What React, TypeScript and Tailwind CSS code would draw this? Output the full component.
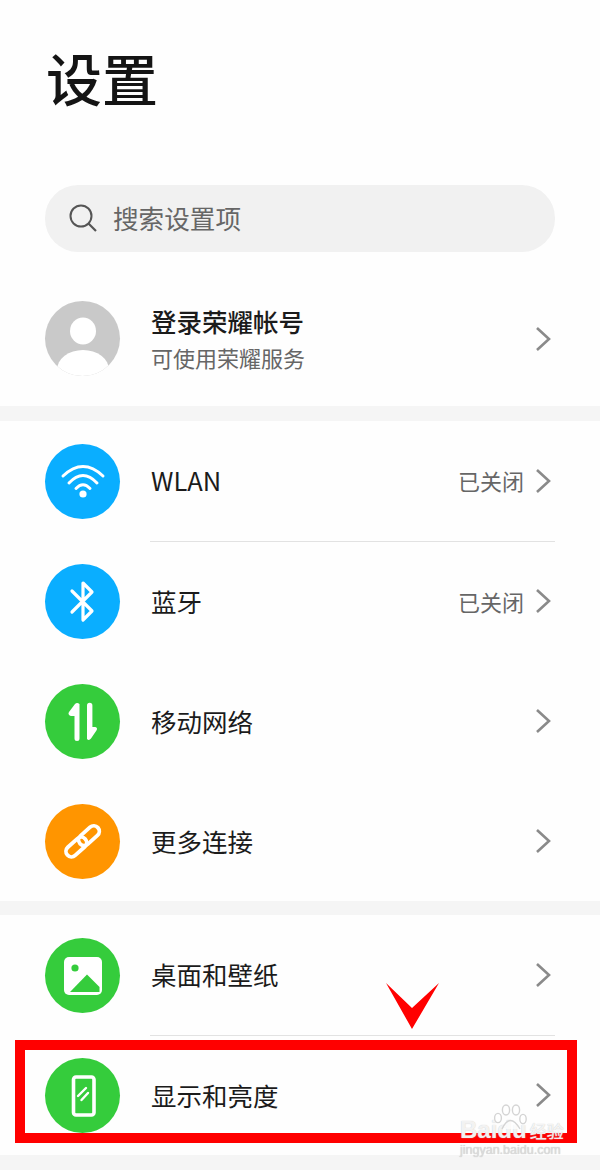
import type { ReactNode } from 'react';

const CJK = 'font-["Noto_Sans_CJK_SC","Noto_Sans",sans-serif]';

function Chevron() {
  return (
    <svg width="16" height="26" viewBox="0 0 16 26" className="shrink-0">
      <path d="M2 2 L14 13 L2 24" fill="none" stroke="#8a8a8a" strokeWidth="2.6" />
    </svg>
  );
}

function IconCircle({ color, children }: { color: string; children: ReactNode }) {
  return (
    <div className={`h-[75px] w-[75px] shrink-0 rounded-full ${color}`}>
      <svg width="75" height="75" viewBox="0 0 75 75">
        {children}
      </svg>
    </div>
  );
}

function WifiIcon() {
  return (
    <IconCircle color="bg-[#0aaeff]">
      <g fill="none" stroke="#fff" strokeWidth="3" strokeLinecap="round">
        <path d="M18 32 Q38 13 58 32" />
        <path d="M24 39 Q38 24 52 39" />
        <path d="M31 44.5 Q38 37 45 44.5" />
      </g>
      <circle cx="38" cy="50" r="3.6" fill="#fff" />
    </IconCircle>
  );
}

function BluetoothIcon() {
  return (
    <IconCircle color="bg-[#0aaeff]">
      <path
        d="M27 27 L47 47 L38 56 V19 L47 28 L27 48"
        fill="none"
        stroke="#fff"
        strokeWidth="3.2"
        strokeLinecap="round"
        strokeLinejoin="round"
      />
    </IconCircle>
  );
}

function MobileIcon() {
  return (
    <IconCircle color="bg-[#35cc3c]">
      <path
        d="M34.5 20 V54.5 a2.5 2.5 0 0 1 -5 0 V32 H26 a2.5 2.5 0 0 1 -2 -4 L30 20 Q32 18 34.5 20 Z"
        fill="#fff"
      />
      <path
        d="M42 21.5 a2.5 2.5 0 0 1 5.4 0 V43 H50 a2 2 0 0 1 1.6 3.2 L46 54.5 Q44 57 42 55 Z"
        fill="#fff"
      />
    </IconCircle>
  );
}

function LinkIcon() {
  return (
    <IconCircle color="bg-[#ff9500]">
      <g fill="none" stroke="#fff" strokeWidth="3.8" transform="rotate(-42 38 37)">
        <rect x="17" y="31.5" width="24" height="11" rx="5.5" />
        <rect x="34" y="31.5" width="24" height="11" rx="5.5" />
      </g>
    </IconCircle>
  );
}

function ImageIcon() {
  return (
    <IconCircle color="bg-[#35cc3c]">
      <rect x="19" y="19" width="38" height="38" rx="5" fill="#fff" />
      <circle cx="30" cy="30" r="3.6" fill="#35cc3c" />
      <path d="M25 54 L42 36.5 L54.5 49 V54 Z" fill="#35cc3c" />
    </IconCircle>
  );
}

function PhoneIcon() {
  return (
    <IconCircle color="bg-[#35cc3c]">
      <rect x="28.5" y="19" width="20.5" height="38" rx="2.5" fill="none" stroke="#fff" strokeWidth="3.6" />
      <g stroke="#fff" strokeWidth="2.4" strokeLinecap="round">
        <path d="M33 38 L41 30" />
        <path d="M36.5 42 L43 35" />
      </g>
    </IconCircle>
  );
}

function Avatar() {
  return (
    <div className="h-[75px] w-[75px] shrink-0 overflow-hidden rounded-full bg-[#c9c9c9]">
      <svg width="75" height="75" viewBox="0 0 75 75">
        <ellipse cx="38" cy="30" rx="13" ry="13.5" fill="#fff" />
        <ellipse cx="38" cy="69" rx="26" ry="20" fill="#fff" />
      </svg>
    </div>
  );
}

function Row({
  icon,
  label,
  value,
  divider,
}: {
  icon: ReactNode;
  label: string;
  value?: string;
  divider?: boolean;
}) {
  return (
    <div className="flex h-[120px] items-center gap-[30px] pl-[45px] pr-[45px]">
      {icon}
      <div
        className={`flex flex-1 items-center pl-px pr-1 ${
          divider ? 'h-[121px] self-start border-b border-[#e2e2e2] pb-px' : 'h-full'
        }`}
      >
        <span className="flex-1 text-[25.5px] text-[#1b1b1b]">{label}</span>
        {value && <span className="mr-[11px] text-[22px] text-[#666]">{value}</span>}
        <Chevron />
      </div>
    </div>
  );
}

function Band({ className }: { className: string }) {
  return <div className={`bg-[#f5f5f5] ${className}`} />;
}

export default function App() {
  return (
    <div className={`relative h-[1170px] w-[600px] overflow-hidden bg-[#fefefe] ${CJK}`}>
      {/* Header */}
      <div className="h-[185px] pl-[46px] pt-[38px]">
        <h1 className="text-[56px] font-medium leading-[78px] text-[#141414]">设置</h1>
      </div>

      {/* Search */}
      <div className="mx-[45px] flex h-[67px] items-center gap-[15px] rounded-[33px] bg-[#f1f1f1] pl-[24px]">
        <svg width="29" height="29" viewBox="0 0 29 29" className="shrink-0">
          <circle cx="12" cy="12" r="10.5" fill="none" stroke="#555" strokeWidth="2" />
          <path d="M19.5 19.5 L27 27" stroke="#555" strokeWidth="2.2" />
        </svg>
        <span className="text-[25.6px] text-[#666]">搜索设置项</span>
      </div>

      {/* Account */}
      <div className="flex h-[154px] items-center gap-[31px] pl-[45px] pr-[49px] pt-[19px]">
        <Avatar />
        <div className="flex flex-1 flex-col pb-[2px]">
          <span className="text-[25.5px] font-medium leading-[36px] text-[#1b1b1b]">登录荣耀帐号</span>
          <span className="mt-[2px] text-[22px] leading-[32px] text-[#666]">可使用荣耀服务</span>
        </div>
        <Chevron />
      </div>

      <Band className="h-[15px]" />

      {/* Connectivity */}
      <Row icon={<WifiIcon />} label="WLAN" value="已关闭" divider />
      <Row icon={<BluetoothIcon />} label="蓝牙" value="已关闭" />
      <Row icon={<MobileIcon />} label="移动网络" />
      <Row icon={<LinkIcon />} label="更多连接" />

      <Band className="h-[14px]" />

      {/* Display */}
      <Row icon={<ImageIcon />} label="桌面和壁纸" divider />
      <Row icon={<PhoneIcon />} label="显示和亮度" />

      <Band className="h-[15px]" />

      {/* Annotation over the screenshot */}
      <div className="absolute left-[15px] top-[1040px] h-[103px] w-[562px] border-[10px] border-[#ff0000]" />
      <svg width="56" height="48" viewBox="0 0 56 48" className="absolute left-[385px] top-[982px]">
        <path d="M1 1 L27 26 L54 1 L27 47 Z" fill="#ff0000" />
      </svg>

      {/* Watermark */}
      <div className="absolute left-[460px] top-[1104px] w-[110px] text-white/80 [text-shadow:0_0_1px_#bdbdbd]">
        <svg width="34" height="28" viewBox="0 0 34 28" className="absolute left-[33px] top-0">
          <g fill="#fff" fillOpacity="0.7" stroke="#d4d4d4" strokeWidth="1.4">
            <ellipse cx="5" cy="14" rx="3.4" ry="4.6" />
            <ellipse cx="13" cy="6" rx="3.6" ry="5" />
            <ellipse cx="23" cy="6" rx="3.6" ry="5" />
            <ellipse cx="30" cy="15" rx="3.2" ry="4.6" />
            <path d="M9 25 Q17 8 27 25" />
          </g>
        </svg>
        <div className="mt-[14px] flex items-baseline gap-[3px]">
          <span className='font-["Liberation_Sans",sans-serif] text-[24px] font-bold leading-[24px]'>Baidu</span>
          <span className="text-[17px] font-medium leading-[24px]">经验</span>
        </div>
        <div className='font-["Liberation_Sans",sans-serif] text-[12.5px] leading-[14px] text-[#dcdcdc]'>
          jingyan.baidu.com
        </div>
      </div>
    </div>
  );
}
